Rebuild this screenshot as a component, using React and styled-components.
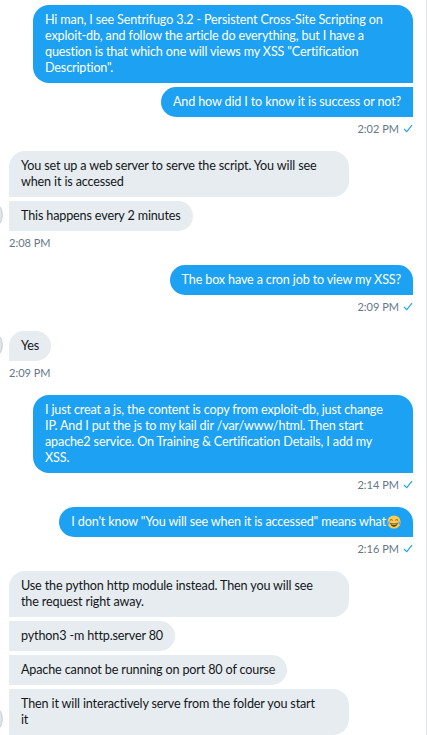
import React from 'react';
import styled, { createGlobalStyle } from 'styled-components';

const GlobalStyle = createGlobalStyle`
  html, body {
    margin: 0;
    padding: 0;
    background: #ffffff;
    overflow: hidden;
  }
  body {
    font-family: Lato, "Liberation Sans", sans-serif;
  }
`;

const Thread = styled.div`
  box-sizing: border-box;
  width: 427px;
  height: 735px;
  border-right: 1px solid #e1e8ed;
  overflow: hidden;
  padding: 5px 13px 0 0;
  display: flex;
  flex-direction: column;
  gap: 16px;
`;

const SentGroup = styled.div`
  display: flex;
  flex-direction: column;
  align-items: flex-end;
  gap: 4px;
`;

const ReceivedGroup = styled.div`
  display: flex;
  flex-direction: column;
  align-items: flex-start;
  gap: 4px;
`;

const ReceivedRow = styled.div`
  display: flex;
  align-items: flex-end;
`;

const Avatar = styled.div`
  flex: none;
  width: 32px;
  height: 32px;
  border-radius: 50%;
  margin-left: -29px;
  margin-right: 6px;
  background: #dfe4e8;
  border: 1px solid #c9d1d7;
  box-sizing: border-box;
`;

const Stack = styled.div`
  display: flex;
  flex-direction: column;
  align-items: flex-start;
  gap: 4px;
`;

const Bubble = styled.div`
  box-sizing: border-box;
  padding: 7px 12px;
  font-size: 12.6px;
  letter-spacing: -0.15px;
  line-height: 16px;
  white-space: nowrap;
  width: ${({ $width }) => ($width ? `${$width}px` : 'auto')};
  background: ${({ $out }) => ($out ? '#1da1f2' : '#e6ecf0')};
  color: ${({ $out }) => ($out ? '#ffffff' : '#14171a')};
  border-radius: ${({ $out, $first }) =>
    $out
      ? `16px ${$first ? '16px' : '0'} 0 16px`
      : `${$first ? '16px' : '0'} 16px 16px 0`};
`;

const Meta = styled.div`
  display: flex;
  align-items: center;
  gap: 4px;
  height: 14px;
  font-size: 11px;
  color: #657786;
  padding-left: ${({ $out }) => ($out ? '0' : '9px')};
`;

const Emoji = styled.svg`
  width: 14px;
  height: 14px;
  vertical-align: -3px;
  margin-left: 1px;
`;

const Check = () => (
  <svg width="10" height="9" viewBox="0 0 10 9">
    <path d="M1 5 L3.8 7.6 L9 1.2" fill="none" stroke="#1da1f2" strokeWidth="1.1" />
  </svg>
);

const JoyFace = () => (
  <Emoji viewBox="0 0 36 36">
    <circle cx="18" cy="18" r="17" fill="#ffcc4d" />
    <path d="M8 13 Q11 10 14 13" fill="none" stroke="#664500" strokeWidth="2.2" strokeLinecap="round" />
    <path d="M22 13 Q25 10 28 13" fill="none" stroke="#664500" strokeWidth="2.2" strokeLinecap="round" />
    <path d="M8 20 Q18 22 28 20 Q26 30 18 30 Q10 30 8 20 Z" fill="#664500" />
    <path d="M11 22 Q18 23.5 25 22 L24.5 24 Q18 25 11.5 24 Z" fill="#ffffff" />
    <path d="M2 17 Q0 24 4 25 Q8 24 7 17 Z" fill="#5dadec" />
    <path d="M29 17 Q28 24 32 25 Q36 24 34 17 Z" fill="#5dadec" />
  </Emoji>
);

const Lines = ({ lines }) =>
  lines.map((line, i) => (
    <React.Fragment key={i}>
      {i > 0 && <br />}
      {line}
    </React.Fragment>
  ));

const groups = [
  {
    out: true,
    time: '2:02 PM',
    bubbles: [
      {
        width: 380,
        lines: [
          'Hi man, I see Sentrifugo 3.2 - Persistent Cross-Site Scripting on',
          'exploit-db, and follow the article do everything, but I have a',
          'question is that which one will views my XSS "Certification',
          'Description".',
        ],
      },
      { lines: ['And how did I to know it is success or not?'] },
    ],
  },
  {
    out: false,
    time: '2:08 PM',
    bubbles: [
      {
        width: 340,
        lines: ['You set up a web server to serve the script. You will see', 'when it is accessed'],
      },
      { lines: ['This happens every 2 minutes'] },
    ],
  },
  {
    out: true,
    time: '2:09 PM',
    bubbles: [{ lines: ['The box have a cron job to view my XSS?'] }],
  },
  {
    out: false,
    time: '2:09 PM',
    bubbles: [{ lines: ['Yes'] }],
  },
  {
    out: true,
    time: '2:14 PM',
    bubbles: [
      {
        width: 380,
        lines: [
          'I just creat a js, the content is copy from exploit-db, just change',
          'IP. And I put the js to my kail dir /var/www/html. Then start',
          'apache2 service. On Training & Certification Details, I add my',
          'XSS.',
        ],
      },
    ],
  },
  {
    out: true,
    time: '2:16 PM',
    bubbles: [{ lines: ['I don\'t know "You will see when it is accessed" means what'], emoji: true }],
  },
  {
    out: false,
    bubbles: [
      {
        width: 340,
        lines: ['Use the python http module instead. Then you will see', 'the request right away.'],
      },
      { lines: ['python3 -m http.server 80'] },
      { lines: ['Apache cannot be running on port 80 of course'] },
      { width: 340, lines: ['Then it will interactively serve from the folder you start', 'it'] },
    ],
  },
];

const renderBubbles = (group) =>
  group.bubbles.map((b, i) => (
    <Bubble key={i} $out={group.out} $first={i === 0} $width={b.width}>
      <Lines lines={b.lines} />
      {b.emoji && <JoyFace />}
    </Bubble>
  ));

const App = () => (
  <>
    <GlobalStyle />
    <Thread>
      {groups.map((group, gi) =>
        group.out ? (
          <SentGroup key={gi}>
            {renderBubbles(group)}
            <Meta $out>
              {group.time}
              <Check />
            </Meta>
          </SentGroup>
        ) : (
          <ReceivedGroup key={gi}>
            <ReceivedRow>
              <Avatar />
              <Stack>{renderBubbles(group)}</Stack>
            </ReceivedRow>
            {group.time && <Meta>{group.time}</Meta>}
          </ReceivedGroup>
        )
      )}
    </Thread>
  </>
);

export default App;
